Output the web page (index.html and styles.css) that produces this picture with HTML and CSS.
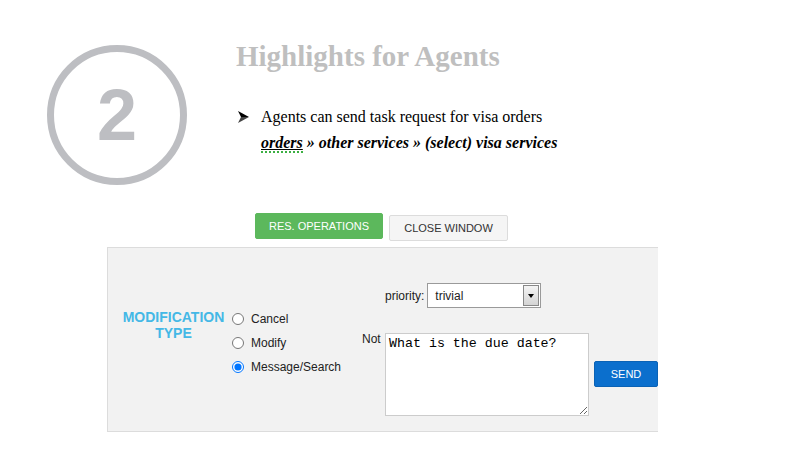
FILE: index.html
```html
<!DOCTYPE html>
<html>
<head>
  <title>Highlights for Agents</title>
  <link rel="stylesheet" href="styles.css">
</head>
<body>
  <div class="intro">
    <div class="step">
      <svg width="146" height="146" viewBox="0 0 146 146">
        <circle cx="73" cy="73" r="66.5" fill="none" stroke="#bdbec2" stroke-width="7"></circle>
      </svg>
      <span class="step-num">2</span>
    </div>
    <div class="intro-text">
      <h1>Highlights for Agents</h1>
      <ul>
        <li>
          <svg class="bullet" width="12" height="12" viewBox="0 0 12 12">
            <path d="M0 0 L11 6 L3 6 Z" fill="#000"></path>
            <path d="M0 12 L11 6 L3 6 Z" fill="#444"></path>
          </svg>
          Agents can send task request for visa orders
        </li>
      </ul>
      <p class="path"><span class="spell">orders</span> » other services » (select) visa services</p>
    </div>
  </div>

  <div class="tabs">
    <button type="button" class="tab-green">RES. OPERATIONS</button>
    <button type="button" class="tab-plain">CLOSE WINDOW</button>
  </div>

  <div class="panel">
    <div class="mod-title">MODIFICATION<br>TYPE</div>
    <div class="radios">
      <label><input type="radio" name="mod"> Cancel</label>
      <label><input type="radio" name="mod"> Modify</label>
      <label><input type="radio" name="mod" checked> Message/Search</label>
    </div>
    <div class="fields">
      <div class="priority">
        <label for="priority">priority:</label>
        <div class="select">
          <span>trivial</span>
          <span class="select-btn"></span>
        </div>
      </div>
      <div class="note">
        <label for="note">Not</label>
        <textarea id="note">What is the due date?</textarea>
        <button type="button" class="send">SEND</button>
      </div>
    </div>
  </div>
</body>
</html>
```

FILE: styles.css
```css
body {
  margin: 0;
  padding: 0;
  background: #fff;
  font-family: "Liberation Sans", Arial, sans-serif;
}

.intro {
  display: flex;
  padding: 42px 0 0 44px;
  height: 170px;
  box-sizing: border-box;
}

.step {
  position: relative;
  width: 146px;
  height: 146px;
}

.step svg {
  display: block;
}

.step-num {
  position: absolute;
  left: 0;
  top: 0;
  width: 146px;
  line-height: 146px;
  text-align: center;
  font-size: 72px;
  font-weight: bold;
  color: #bdbec2;
}

.intro-text {
  margin-left: 46px;
  font-family: "Liberation Serif", "Times New Roman", serif;
}

h1 {
  margin: 0;
  font-size: 29px;
  color: #bfbfbf;
  line-height: 30px;
  position: relative;
  top: -1px;
}

ul {
  margin: 36px 0 0 0;
  padding: 0 0 0 25px;
  list-style: none;
  font-size: 16px;
}

li {
  position: relative;
}

.bullet {
  position: absolute;
  left: -23px;
  top: 3px;
}

.path {
  margin: 8px 0 0 25px;
  font-size: 16px;
  font-weight: bold;
  font-style: italic;
}

.spell {
  text-decoration: underline;
  border-bottom: 2px dotted #3cb043;
}

.tabs {
  display: flex;
  align-items: flex-start;
  gap: 6px;
  padding: 43px 0 0 255px;
  height: 77px;
  box-sizing: border-box;
}

.tabs button {
  font-family: "Liberation Sans", Arial, sans-serif;
  font-size: 11px;
  border-radius: 2px;
  cursor: pointer;
}

.tab-green {
  width: 128px;
  height: 26px;
  background: #5cb85c;
  color: #fff;
  border: 1px solid #5cb85c;
}

.tab-plain {
  width: 119px;
  height: 26px;
  margin-top: 2px;
  background: #f5f5f5;
  color: #333;
  border: 1px solid #dcdcdc;
}

.panel {
  display: flex;
  margin-left: 107px;
  width: 551px;
  height: 185px;
  box-sizing: border-box;
  background: #f2f2f2;
  border: 1px solid #dcdcdc;
  border-right: none;
  overflow: hidden;
  font-size: 12px;
  color: #222;
}

.mod-title {
  width: 105px;
  margin: 61px 0 0 13px;
  text-align: center;
  color: #44b8e6;
  font-weight: bold;
  font-size: 14px;
  line-height: 16px;
}

.radios {
  display: flex;
  flex-direction: column;
  margin: 64px 0 0 5px;
  gap: 10px;
  width: 128px;
}

.radios label {
  display: flex;
  align-items: center;
  height: 14px;
}

.radios input {
  margin: 0 7px 0 1px;
  width: 12px;
  height: 12px;
}

.fields {
  display: flex;
  flex-direction: column;
}

.priority {
  display: flex;
  align-items: center;
  margin: 35px 0 0 26px;
}

.priority label {
  margin-right: 3px;
}

.select {
  display: flex;
  justify-content: space-between;
  align-items: center;
  width: 114px;
  height: 25px;
  box-sizing: border-box;
  background: #fff;
  border: 1px solid #9a9a9a;
  padding-left: 7px;
}

.select-btn {
  width: 16px;
  height: 21px;
  margin-right: 1px;
  box-sizing: border-box;
  border: 1px solid #888;
  background: linear-gradient(#f4f4f4, #d4d4d4);
  position: relative;
}

.select-btn::after {
  content: "";
  position: absolute;
  left: 4px;
  top: 8px;
  border-left: 3px solid transparent;
  border-right: 3px solid transparent;
  border-top: 4px solid #000;
}

.note {
  display: flex;
  align-items: flex-start;
  margin: 24px 0 0 3px;
}

.note label {
  width: 23px;
}

.note textarea {
  width: 204px;
  height: 83px;
  box-sizing: border-box;
  margin: 1px 0 0 0;
  padding: 2px 3px;
  border: 1px solid #ccc;
  font-family: "Liberation Mono", "Courier New", monospace;
  font-size: 13.3px;
  resize: both;
}

.send {
  margin: 29px 0 0 5px;
  width: 64px;
  height: 26px;
  background: #0b6fcd;
  border: 1px solid #0a62b5;
  border-radius: 2px;
  color: #fff;
  font-family: "Liberation Sans", Arial, sans-serif;
  font-size: 11px;
}
```
